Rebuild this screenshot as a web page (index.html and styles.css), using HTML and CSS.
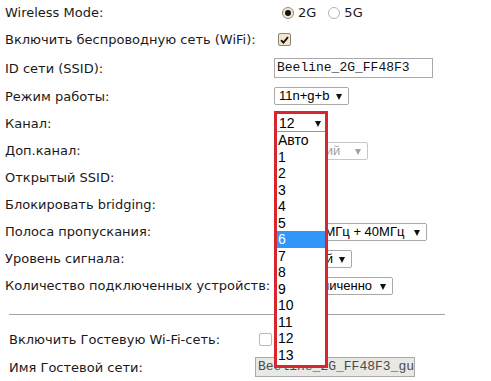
FILE: index.html
```html
<!DOCTYPE html>
<html lang="ru">
<head>
<meta charset="utf-8">
<title>Wireless</title>
<link rel="stylesheet" href="styles.css">
</head>
<body>
<div class="page">
  <div class="form">
    <div class="row h25">
      <div class="label">Wireless Mode:</div>
      <div class="ctrl radios">
        <span class="radio on"></span><span class="rtext">2G</span>
        <span class="radio"></span><span class="rtext">5G</span>
      </div>
    </div>
    <div class="row h29">
      <div class="label">Включить беспроводную сеть (WiFi):</div>
      <div class="ctrl"><span class="check on"><svg width="9" height="8" viewBox="0 0 9 8"><path d="M1 4.2 L3.4 6.6 L8 1.2" fill="none" stroke="#111" stroke-width="1.8"/></svg></span></div>
    </div>
    <div class="row h28">
      <div class="label">ID сети (SSID):</div>
      <div class="ctrl"><span class="input">Beeline_2G_FF48F3</span></div>
    </div>
    <div class="row h28">
      <div class="label">Режим работы:</div>
      <div class="ctrl"><span class="select w75"><span class="stext">11n+g+b</span><span class="arrow"></span></span></div>
    </div>
    <div class="row h27">
      <div class="label">Канал:</div>
      <div class="ctrl"><span class="select w54"><span class="stext">12</span><span class="arrow"></span></span></div>
    </div>
    <div class="row h27">
      <div class="label">Доп.канал:</div>
      <div class="ctrl"><span class="select w94 disabled pad-dop"><span class="stext">Верхний</span><span class="arrow"></span></span></div>
    </div>
    <div class="row h27">
      <div class="label">Открытый SSID:</div>
      <div class="ctrl"></div>
    </div>
    <div class="row h27">
      <div class="label">Блокировать bridging:</div>
      <div class="ctrl"></div>
    </div>
    <div class="row h27">
      <div class="label">Полоса пропускания:</div>
      <div class="ctrl"><span class="select w153 pad-band"><span class="stext">20МГц + 40МГц</span><span class="arrow"></span></span></div>
    </div>
    <div class="row h27">
      <div class="label">Уровень сигнала:</div>
      <div class="ctrl"><span class="select w78 pad-lvl"><span class="stext">Высокий</span><span class="arrow"></span></span></div>
    </div>
    <div class="row h27">
      <div class="label">Количество подключенных устройств:</div>
      <div class="ctrl"><span class="select w119"><span class="stext">Неограниченно</span><span class="arrow"></span></span></div>
    </div>
  </div>

  <div class="sep"></div>

  <div class="form guest">
    <div class="row h28">
      <div class="label">Включить Гостевую Wi-Fi-сеть:</div>
      <div class="ctrl"><span class="check"></span></div>
    </div>
    <div class="row h28">
      <div class="label">Имя Гостевой сети:</div>
      <div class="ctrl"><span class="input disabled">Beeline_2G_FF48F3_gu</span></div>
    </div>
  </div>

  <div class="popup">
    <div class="popsel"><span class="stext">12</span><span class="arrow"></span></div>
    <ul class="options">
      <li>Авто</li>
      <li>1</li>
      <li>2</li>
      <li>3</li>
      <li>4</li>
      <li>5</li>
      <li class="hl">6</li>
      <li>7</li>
      <li>8</li>
      <li>9</li>
      <li>10</li>
      <li>11</li>
      <li>12</li>
      <li>13</li>
    </ul>
  </div>
</div>
</body>
</html>
```

FILE: styles.css
```css
* { box-sizing: border-box; }
html, body { margin: 0; padding: 0; background: #fff; }
body { width: 491px; height: 381px; overflow: hidden; }

.page {
  position: relative;
  width: 491px;
  height: 381px;
  font-family: "DejaVu Sans", Verdana, sans-serif;
  font-size: 13px;
  color: #1a1a1a;
}

.form { display: flex; flex-direction: column; }
.row { display: flex; align-items: center; }
.h25 { height: 25px; }
.h27 { height: 27px; }
.h28 { height: 28px; }
.h29 { height: 29px; }

.label { width: 274px; padding-left: 5px; white-space: nowrap; line-height: 15px; }
.ctrl { display: flex; align-items: center; }

.guest .label { width: 255px; padding-left: 9px; }

/* radios */
.radios { padding-left: 8px; }
.radio {
  width: 12px; height: 12px;
  border-radius: 50%;
  border: 1px solid #b4b4b4;
  background: #fff;
  display: inline-flex; align-items: center; justify-content: center;
}
.radio.on { background: #f5ead7; border-color: #8f8678; }
.radio.on::after { content: ""; width: 6px; height: 6px; border-radius: 50%; background: #111; }
.rtext { margin-left: 4px; margin-right: 12px; line-height: 15px; }

/* checkbox */
.check {
  margin-left: 4px;
  width: 13px; height: 13px;
  border: 1px solid #b8b8b8;
  border-radius: 2px;
  background: #fff;
  display: inline-flex; align-items: center; justify-content: center;
}
.check.on { background: #f4e6cd; border-color: #8b8378; }
.guest .check { margin-left: 4px; }

/* text input */
.input {
  width: 159px; height: 20px;
  border: 1px solid #a9a9a9;
  padding-left: 2px;
  font-family: "Liberation Mono", "Courier New", monospace;
  font-size: 13px;
  line-height: 18px;
  color: #111;
  white-space: nowrap;
  overflow: hidden;
}
.input.disabled { background: #e8e8e4; color: #4a4a4a; width: 160px; }

/* select */
.select {
  position: relative;
  height: 18px;
  border: 1px solid #a9a9a9;
  border-radius: 2px;
  padding-left: 4px;
  font-family: "Liberation Sans", Arial, sans-serif;
  font-size: 13px;
  line-height: 16px;
  color: #000;
  white-space: nowrap;
  display: flex; align-items: center;
}
.select .arrow, .popsel .arrow {
  position: absolute;
  right: 6px; top: 6px;
  width: 0; height: 0;
  border-left: 3.5px solid transparent;
  border-right: 3.5px solid transparent;
  border-top: 6px solid #111;
}
.select.disabled { border-color: #c8c8c8; color: #a0a0a0; }
.select.disabled .arrow { border-top-color: #a0a0a0; }
.w54 { width: 54px; }
.w75 { width: 75px; }
.w78 { width: 78px; }
.w94 { width: 94px; }
.w119 { width: 119px; }
.w153 { width: 153px; }
.pad-dop { padding-left: 14px; }
.pad-band { padding-left: 35px; }
.pad-lvl { padding-left: 6px; }

.sep {
  margin-top: 15px;
  margin-left: 9px;
  width: 436px;
  height: 1px;
  background: #a3a3a3;
}
.guest { margin-top: 10px; }

/* open dropdown with annotation frame */
.popup {
  position: absolute;
  left: 274px; top: 111px;
  width: 54px; height: 257px;
  border: 3px solid #d7262e;
  background: #fff;
  font-family: "Liberation Sans", Arial, sans-serif;
  font-size: 13px;
  color: #000;
}
.popsel {
  position: relative;
  height: 18px;
  border-bottom: 1px solid #7a9cc8;
  padding-left: 2px;
  line-height: 18px;
  font-size: 14px;
}
.popsel .arrow { right: 4px; top: 7px; }
.options { list-style: none; margin: 0; padding: 0; }
.options li {
  height: 16.5px;
  line-height: 16.5px;
  padding-left: 1px;
  font-size: 14px;
}
.options li.hl { background: #3296f8; color: #fff; }
```
